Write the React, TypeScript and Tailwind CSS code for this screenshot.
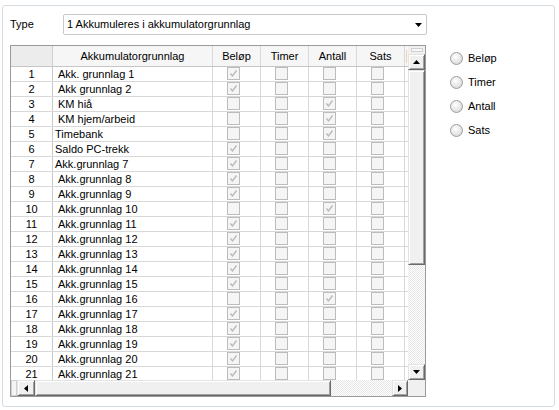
import React from "react";

interface Row {
  name: string;
  indent: boolean;
  checks: number[];
}

const B = [1, 0, 0, 0];
const A = [0, 0, 1, 0];

const rows: Row[] = [
  { name: "Akk. grunnlag 1", indent: true, checks: B },
  { name: "Akk grunnlag 2", indent: true, checks: B },
  { name: "KM hiå", indent: true, checks: A },
  { name: "KM hjem/arbeid", indent: true, checks: A },
  { name: "Timebank", indent: false, checks: A },
  { name: "Saldo PC-trekk", indent: false, checks: B },
  { name: "Akk.grunnlag 7", indent: false, checks: B },
  ...[8, 9, 10, 11, 12, 13, 14, 15, 16, 17, 18, 19, 20, 21].map((n) => ({
    name: `Akk.grunnlag ${n}`,
    indent: true,
    checks: n === 10 || n === 16 ? A : B,
  })),
];

const columns = ["Beløp", "Timer", "Antall", "Sats"];

function CheckBox({ checked }: { checked: boolean }) {
  return (
    <div className="w-[13px] h-[13px] border border-[#bcbcbc] bg-[#f5f5f5] flex items-center justify-center">
      {checked && (
        <svg width="11" height="11" viewBox="0 0 11 11">
          <path d="M2.5 5.5 L4.5 8 L8.5 2.5" fill="none" stroke="#b8b8b8" strokeWidth="1.3" />
        </svg>
      )}
    </div>
  );
}

function Arrow({ dir }: { dir: "up" | "down" | "left" | "right" }) {
  const pts = {
    up: "0,4 7,4 3.5,0",
    down: "0,0 7,0 3.5,4",
    left: "4,0 4,7 0,3.5",
    right: "0,0 0,7 4,3.5",
  }[dir];
  const vertical = dir === "up" || dir === "down";
  return (
    <svg width={vertical ? 7 : 4} height={vertical ? 4 : 7} viewBox={vertical ? "0 0 7 4" : "0 0 4 7"}>
      <polygon points={pts} fill="#000" />
    </svg>
  );
}

const btn =
  "bg-[#f0f0f0] border border-t-[#e3e3e3] border-l-[#e3e3e3] border-r-[#696969] border-b-[#696969] shadow-[inset_1px_1px_0_#ffffff,inset_-1px_-1px_0_#a0a0a0] flex items-center justify-center";

const track =
  "bg-[image:repeating-conic-gradient(#e6e6e6_0%_25%,#ffffff_0%_50%)] bg-[length:2px_2px]";

export default function App() {
  return (
    <div className="w-[559px] h-[410px] bg-white pt-[5px] pl-[2px] font-['Liberation_Sans',Arial,sans-serif] text-[11px] text-black">
      <div className="w-[553px] h-[402px] border border-[#d5dde3] rounded-[3px] pl-[7px] pt-[8px]">

        {/* type selector */}
        <div className="flex items-center h-[21px]">
          <div className="w-[53px]">Type</div>
          <div className="w-[364px] h-[21px] border border-[#c9c9c9] rounded-[2px] flex items-center justify-between pl-[3px] pr-[4px]">
            <span>1 Akkumuleres i akkumulatorgrunnlag</span>
            <Arrow dir="down" />
          </div>
        </div>

        <div className="flex mt-[10px]">

          {/* grid */}
          <div className="w-[416px] h-[352px] border border-[#9a9a9a] flex flex-col">
            <div className="flex h-[334px]">
              <div className="w-[397px] h-[334px] overflow-hidden">
                <div className="flex h-[21px] border-b border-[#c6c6c6] bg-[#f6f6f6]">
                  <div className="w-[42px] border-r border-[#d0d0d0] bg-[#ececec]" />
                  <div className="w-[160px] border-r border-[#d8d8d8] flex items-center justify-center pt-[1px]">
                    Akkumulatorgrunnlag
                  </div>
                  {columns.map((c) => (
                    <div key={c} className="w-[48px] border-r border-[#d8d8d8] flex items-center justify-center pt-[1px]">
                      {c}
                    </div>
                  ))}
                  <div className="w-[3px] flex items-center pl-[1px]">
                    <div className="w-[1px] h-[13px] bg-[#f2d3a4]" />
                  </div>
                </div>

                {rows.map((r, i) => (
                  <div key={i} className="flex h-[15px] border-b border-[#d8d8d8]">
                    <div className="w-[42px] border-r border-[#c8c8c8] flex items-center justify-center pt-[1px]">
                      {i + 1}
                    </div>
                    <div className={`w-[160px] border-r border-[#d8d8d8] flex items-center whitespace-nowrap pt-[1px] ${r.indent ? "pl-[5px]" : "pl-[2px]"}`}>
                      {r.name}
                    </div>
                    {r.checks.map((v, j) => (
                      <div key={j} className="w-[48px] border-r border-[#d8d8d8] pl-[14px] flex items-start">
                        <CheckBox checked={v === 1} />
                      </div>
                    ))}
                  </div>
                ))}
              </div>

              {/* vertical scrollbar */}
              <div className="w-[17px] h-[334px] flex flex-col">
                <div className="h-[8px] bg-[#f0f0f0] flex justify-center pt-[2px]">
                  <div className="w-[12px] h-[4px] border border-[#d0d0d0] bg-[#f8f8f8]" />
                </div>
                <div className={`h-[16px] ${btn}`}>
                  <Arrow dir="up" />
                </div>
                <div className={`h-[195px] ${btn}`} />
                <div className={`flex-1 ${track}`} />
                <div className={`h-[16px] ${btn}`}>
                  <Arrow dir="down" />
                </div>
              </div>
            </div>

            {/* horizontal scrollbar */}
            <div className="flex h-[16px]">
              <div className="w-[6px] border border-[#d0d0d0] bg-[#f4f4f4]" />
              <div className={`w-[18px] ${btn}`}>
                <Arrow dir="left" />
              </div>
              <div className={`w-[296px] ${btn}`} />
              <div className={`flex-1 ${track}`} />
              <div className={`w-[16px] ${btn}`}>
                <Arrow dir="right" />
              </div>
              <div className="w-[17px] bg-[#f0f0f0]" />
            </div>
          </div>

          {/* radio options */}
          <div className="ml-[24px] pt-[1px] flex flex-col">
            {columns.map((c) => (
              <div key={c} className="h-[24px] flex items-center">
                <div className="w-[13px] h-[13px] rounded-full border border-[#9c9c9c] bg-[radial-gradient(circle_at_40%_35%,#ffffff_0%,#e6e6e6_55%,#cfcfcf_100%)]" />
                <span className="ml-[5px]">{c}</span>
              </div>
            ))}
          </div>
        </div>
      </div>
    </div>
  );
}
